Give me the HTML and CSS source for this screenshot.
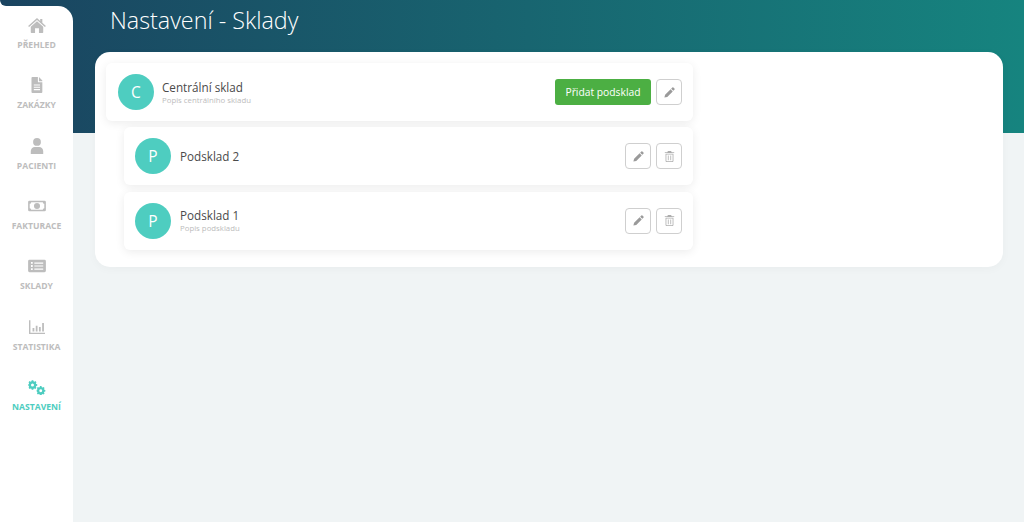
FILE: index.html
```html
<!DOCTYPE html>
<html lang="en">
<head>
    <meta charset="UTF-8">
    <meta name="viewport" content="width=device-width, initial-scale=1.0">
    <title>Nastavení - Sklady</title>
    <link rel="stylesheet" href="styles.css">
</head>
<body>
    <div class="app">
        <nav class="sidebar">
            <a class="nav-item">
                <svg class="nav-icon" viewBox="0 0 20 18"><path d="M10 1.2 13.6 4.4V2.2H16V6.5L20 10 18.9 11.2 10 3.4 1.1 11.2 0 10ZM10 4.8 17 10.9V17.2A.8.8 0 0 1 16.2 18H12.2V12.6H7.8V18H3.8A.8.8 0 0 1 3 17.2V10.9Z"/></svg>
                <span>PŘEHLED</span>
            </a>
            <a class="nav-item">
                <svg class="nav-icon" viewBox="0 0 20 18"><path fill-rule="evenodd" d="M4.8 0H11V5A1 1 0 0 0 12 6H16V17A1 1 0 0 1 15 18H4.8A1 1 0 0 1 3.8 17V1A1 1 0 0 1 4.8 0ZM12.2 0 16 3.8V4.8H12.2ZM6.4 8.4V9.6H13.4V8.4ZM6.4 11V12.2H13.4V11ZM6.4 13.6V14.8H13.4V13.6Z"/></svg>
                <span>ZAKÁZKY</span>
            </a>
            <a class="nav-item">
                <svg class="nav-icon" viewBox="0 0 20 18"><circle cx="10" cy="4.4" r="4.4"/><path d="M3 18V15A4.6 4.6 0 0 1 7.6 10.2H12.4A4.6 4.6 0 0 1 17 15V18Z"/></svg>
                <span>PACIENTI</span>
            </a>
            <a class="nav-item">
                <svg class="nav-icon" viewBox="0 0 20 18"><path fill-rule="evenodd" d="M1.5 3H18.5A1.5 1.5 0 0 1 20 4.5V13.5A1.5 1.5 0 0 1 18.5 15H1.5A1.5 1.5 0 0 1 0 13.5V4.5A1.5 1.5 0 0 1 1.5 3ZM3.5 4.8A1.7 1.7 0 0 1 1.8 6.5V11.5A1.7 1.7 0 0 1 3.5 13.2H16.5A1.7 1.7 0 0 1 18.2 11.5V6.5A1.7 1.7 0 0 1 16.5 4.8ZM10 5.6A3.4 3.4 0 1 1 10 12.4 3.4 3.4 0 0 1 10 5.6Z"/></svg>
                <span>FAKTURACE</span>
            </a>
            <a class="nav-item">
                <svg class="nav-icon" viewBox="0 0 20 18"><path fill-rule="evenodd" d="M1.6 2H18.4A1.6 1.6 0 0 1 20 3.6V14.4A1.6 1.6 0 0 1 18.4 16H1.6A1.6 1.6 0 0 1 0 14.4V3.6A1.6 1.6 0 0 1 1.6 2ZM3.2 4.6V6.6H5.2V4.6ZM3.2 8V10H5.2V8ZM3.2 11.4V13.4H5.2V11.4ZM7 5V6.4H17V5ZM7 8.3V9.7H17V8.3ZM7 11.7V13.1H17V11.7Z"/></svg>
                <span>SKLADY</span>
            </a>
            <a class="nav-item">
                <svg class="nav-icon" viewBox="0 0 20 18"><path d="M1 1.5H2.6V15.4H19V17H1.8A.8.8 0 0 1 1 16.2ZM5 10H7V14.2H5ZM8.6 7.6H10.6V14.2H8.6ZM12.2 9H14.2V14.2H12.2ZM15.8 4.6H17.8V14.2H15.8Z"/></svg>
                <span>STATISTIKA</span>
            </a>
            <a class="nav-item active">
                <svg class="nav-icon" viewBox="0 0 20 18">
                    <path fill-rule="evenodd" d="M5.2 0H7.6L8 1.6 9.4 2.2 10.8 1.3 12.4 3 11.5 4.4 12.1 5.8 13.6 6.2V8.4L12.1 8.8 11.5 10.2 12.4 11.6 10.8 13.2 9.4 12.4 8 13 7.6 14.4H5.2L4.8 13 3.4 12.4 2 13.2 .4 11.6 1.3 10.2.7 8.8 0 8.4V6.2L.7 5.8 1.3 4.4.4 3 2 1.3 3.4 2.2 4.8 1.6ZM6.4 5A2.3 2.3 0 1 0 6.4 9.6 2.3 2.3 0 0 0 6.4 5Z" transform="translate(.2 1.4) scale(.74)"/>
                    <path fill-rule="evenodd" d="M5.2 0H7.6L8 1.6 9.4 2.2 10.8 1.3 12.4 3 11.5 4.4 12.1 5.8 13.6 6.2V8.4L12.1 8.8 11.5 10.2 12.4 11.6 10.8 13.2 9.4 12.4 8 13 7.6 14.4H5.2L4.8 13 3.4 12.4 2 13.2 .4 11.6 1.3 10.2.7 8.8 0 8.4V6.2L.7 5.8 1.3 4.4.4 3 2 1.3 3.4 2.2 4.8 1.6ZM6.4 5A2.3 2.3 0 1 0 6.4 9.6 2.3 2.3 0 0 0 6.4 5Z" transform="translate(9.6 8) scale(.72)"/>
                </svg>
                <span>NASTAVENÍ</span>
            </a>
        </nav>

        <main class="content">
            <h1 class="page-title">Nastavení - Sklady</h1>
            <section class="panel">
                <div class="store-card">
                    <div class="avatar">C</div>
                    <div class="store-text">
                        <div class="store-name">Centrální sklad</div>
                        <div class="store-desc">Popis centrálního skladu</div>
                    </div>
                    <div class="store-actions">
                        <button class="btn-add">Přidat podsklad</button>
                        <button class="btn-icon">
                            <svg viewBox="0 0 14 14"><path d="M10.6.7A1 1 0 0 1 12 .7L13.3 2A1 1 0 0 1 13.3 3.4L11.8 4.9 9.1 2.2ZM8.4 2.9 11.1 5.6 4.1 12.6.5 13.5 1.4 9.9Z"/></svg>
                        </button>
                    </div>
                </div>
                <div class="store-card sub">
                    <div class="avatar">P</div>
                    <div class="store-text">
                        <div class="store-name">Podsklad 2</div>
                    </div>
                    <div class="store-actions">
                        <button class="btn-icon">
                            <svg viewBox="0 0 14 14"><path d="M10.6.7A1 1 0 0 1 12 .7L13.3 2A1 1 0 0 1 13.3 3.4L11.8 4.9 9.1 2.2ZM8.4 2.9 11.1 5.6 4.1 12.6.5 13.5 1.4 9.9Z"/></svg>
                        </button>
                        <button class="btn-icon">
                            <svg class="trash" viewBox="0 0 14 14"><path fill-rule="evenodd" d="M5 0H9L9.8 1.6H13V2.7H1V1.6H4.2ZM2 3.4H12V12.6A1.4 1.4 0 0 1 10.6 14H3.4A1.4 1.4 0 0 1 2 12.6ZM3 4.4V12.4A.6.6 0 0 0 3.6 13H10.4A.6.6 0 0 0 11 12.4V4.4ZM4.9 5.6H5.9V11.8H4.9ZM8.1 5.6H9.1V11.8H8.1Z"/></svg>
                        </button>
                    </div>
                </div>
                <div class="store-card sub">
                    <div class="avatar">P</div>
                    <div class="store-text">
                        <div class="store-name">Podsklad 1</div>
                        <div class="store-desc">Popis podskladu</div>
                    </div>
                    <div class="store-actions">
                        <button class="btn-icon">
                            <svg viewBox="0 0 14 14"><path d="M10.6.7A1 1 0 0 1 12 .7L13.3 2A1 1 0 0 1 13.3 3.4L11.8 4.9 9.1 2.2ZM8.4 2.9 11.1 5.6 4.1 12.6.5 13.5 1.4 9.9Z"/></svg>
                        </button>
                        <button class="btn-icon">
                            <svg class="trash" viewBox="0 0 14 14"><path fill-rule="evenodd" d="M5 0H9L9.8 1.6H13V2.7H1V1.6H4.2ZM2 3.4H12V12.6A1.4 1.4 0 0 1 10.6 14H3.4A1.4 1.4 0 0 1 2 12.6ZM3 4.4V12.4A.6.6 0 0 0 3.6 13H10.4A.6.6 0 0 0 11 12.4V4.4ZM4.9 5.6H5.9V11.8H4.9ZM8.1 5.6H9.1V11.8H8.1Z"/></svg>
                        </button>
                    </div>
                </div>
            </section>
        </main>
    </div>
</body>
</html>
```

FILE: styles.css
```css
* {
    box-sizing: border-box;
}
html, body {
    height: 100%;
}
body {
    margin: 0;
    font-family: "Open Sans", sans-serif;
    background-color: #f0f4f5;
    overflow: hidden;
}
.app {
    display: flex;
    height: 100vh;
    background-image: linear-gradient(90deg, #1a4460 0%, #16847f 100%);
    background-size: 100% 133px;
    background-repeat: no-repeat;
}
.sidebar {
    position: relative;
    flex: 0 0 73px;
    margin-top: 6px;
    padding-top: 11px;
    background: #fff;
    border-top-right-radius: 15px;
}
/* dark band above the sidebar ends with a rounded corner on the left */
.sidebar::before {
    content: "";
    position: absolute;
    top: -6px;
    left: 0;
    width: 8px;
    height: 6px;
    background: #1a4460;
    border-bottom-left-radius: 6px;
    box-shadow: -2px 2px 0 2px #fff;
    clip-path: inset(0 0 0 -2px);
}
.nav-item {
    display: flex;
    flex-direction: column;
    align-items: center;
    height: 60.33px;
    color: #bdbdbd;
    font-size: 8.6px;
    font-weight: 700;
    line-height: 12px;
}
.nav-item.active {
    color: #4ecdc0;
}
.nav-icon {
    display: block;
    width: 18px;
    height: 16px;
    margin-bottom: 6px;
    fill: #bdbdbd;
}
.nav-item.active .nav-icon {
    fill: #4ecdc0;
}
.content {
    flex: 1;
    padding: 0 21px 0 22px;
    min-width: 0;
}
.page-title {
    margin: 0;
    height: 52px;
    padding: 3px 0 0 15px;
    color: #fff;
    font-size: 23.3px;
    font-weight: 300;
    line-height: 34px;
}
.panel {
    display: flex;
    flex-direction: column;
    gap: 6.4px;
    height: 215px;
    padding: 11px 0 0 11px;
    background: #fff;
    border-radius: 15px;
    box-shadow: 0 2px 10px rgba(0,0,0,0.03);
}
.store-card {
    display: flex;
    align-items: center;
    width: 587px;
    height: 58px;
    padding: 0 11px 0 12px;
    background: #fff;
    border-radius: 6px;
    box-shadow: 0 2px 10px rgba(0,0,0,0.08);
}
.store-card.sub {
    width: 569px;
    margin-left: 18px;
    padding-left: 11px;
}
.avatar {
    flex: 0 0 36px;
    height: 36px;
    border-radius: 50%;
    background: #4ecdc0;
    color: #fff;
    font-size: 15.5px;
    line-height: 36px;
    text-align: center;
}
.store-text {
    flex: 1;
    margin-left: 8px;
    min-width: 0;
}
.sub .store-text {
    margin-left: 9px;
}
.store-name {
    color: #4a4a4a;
    font-size: 11.7px;
    line-height: 16px;
}
.store-desc {
    color: #bcbcbc;
    font-size: 7.8px;
    line-height: 11px;
}
.store-actions {
    display: flex;
    gap: 5px;
}
.store-actions button {
    height: 26px;
    font-family: inherit;
    cursor: pointer;
}
.btn-add {
    width: 96px;
    padding: 0;
    background-color: #4caf43;
    color: #fff;
    border: none;
    border-radius: 3px;
    font-size: 10.3px;
}
.btn-icon {
    display: flex;
    align-items: center;
    justify-content: center;
    width: 26px;
    padding: 0;
    background: #fff;
    border: 1px solid #cfcfcf;
    border-radius: 4px;
}
.btn-icon svg {
    width: 11px;
    height: 11px;
    fill: #9a9a9a;
}
.btn-icon .trash {
    fill: #adadad;
}
```
